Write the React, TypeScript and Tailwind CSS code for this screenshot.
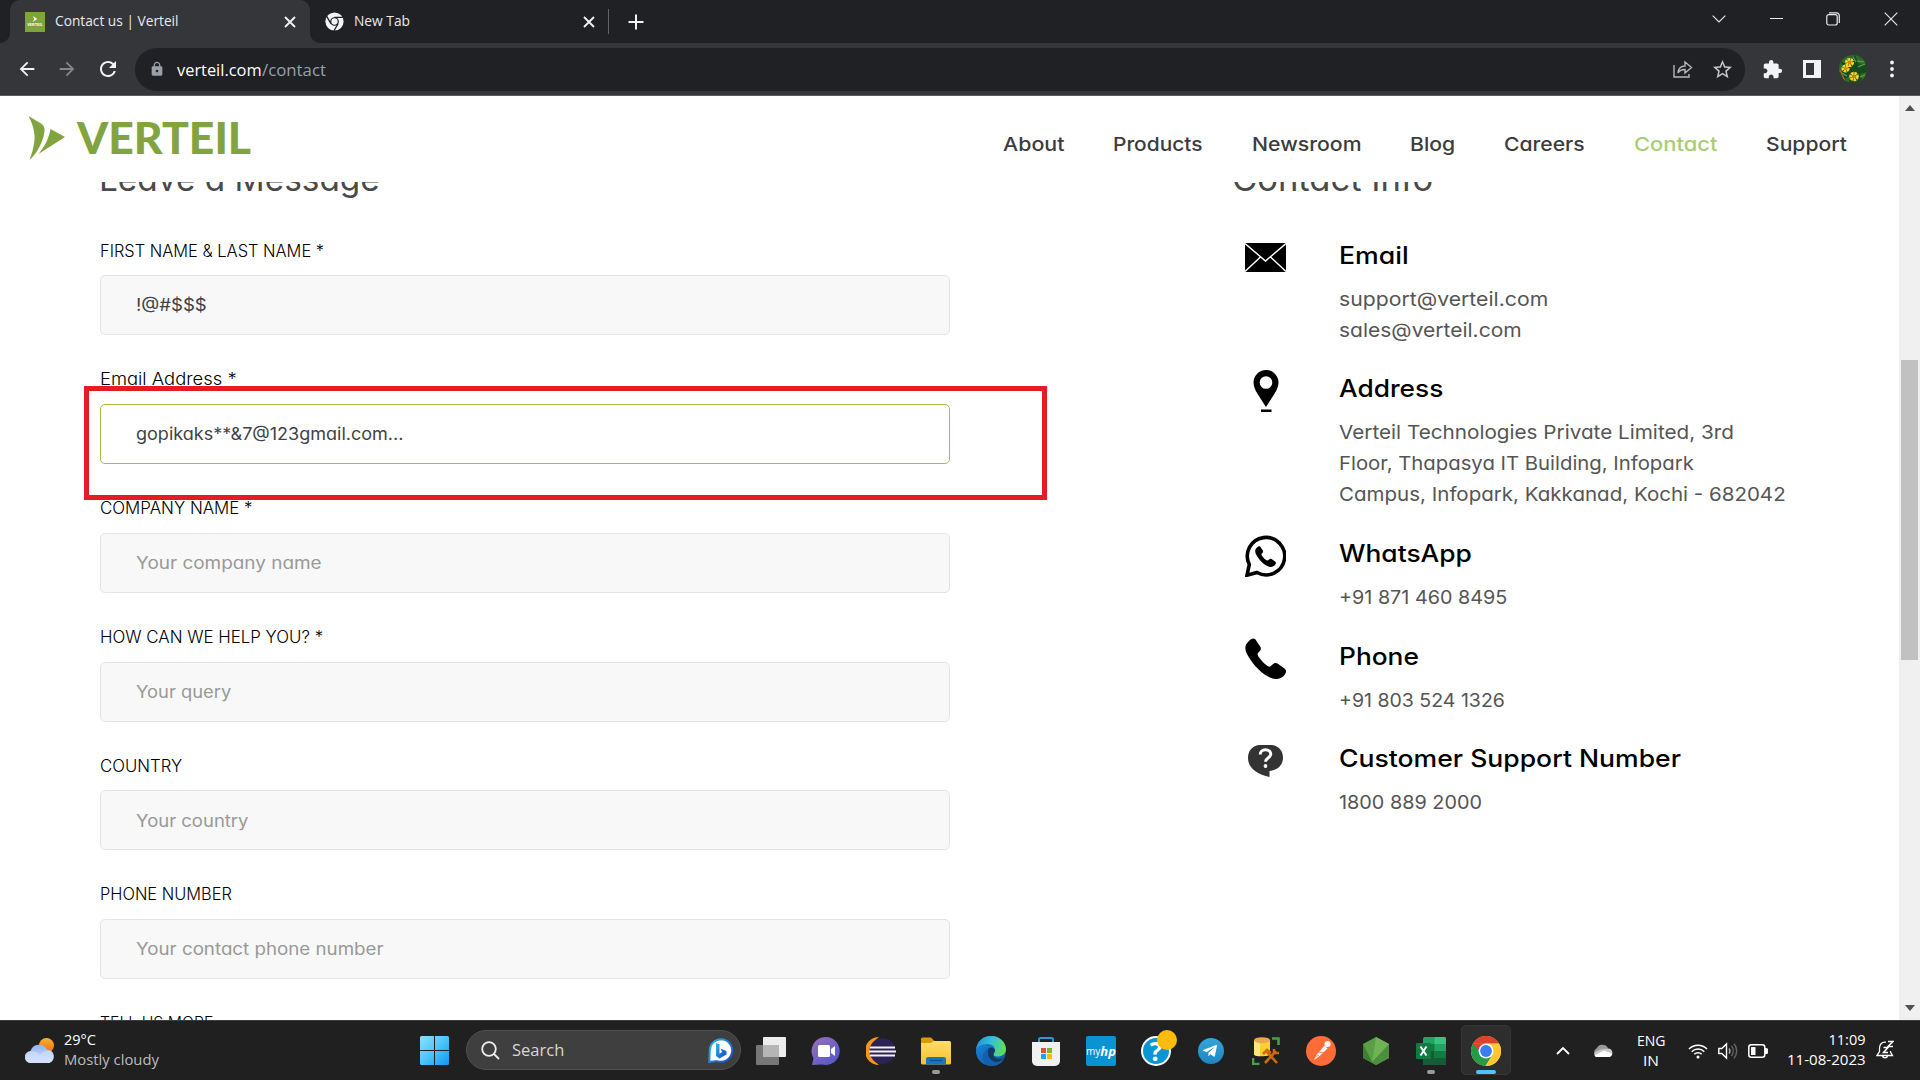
import { useLayoutEffect, useRef, type ReactNode } from "react";
import { MdArrowBack, MdArrowForward, MdExtension, MdLock, MdRefresh, MdStarBorder } from "react-icons/md";
import { FaTelegramPlane } from "react-icons/fa";

/* Single line of text whose glyphs are stretched so that it spans w pixels. */
function Fit({ w, className = "", children }: { w: number; className?: string; children: string }) {
  const ref = useRef<HTMLSpanElement>(null);
  useLayoutEffect(() => {
    const el = ref.current;
    if (!el) return;
    el.style.transform = `scaleX(${w / el.offsetWidth})`;
  }, [w, children]);
  return (
    <span className={"block shrink-0 " + className} style={{ width: w }}>
      <span ref={ref} className="inline-block origin-left whitespace-nowrap">
        {children}
      </span>
    </span>
  );
}

function CloseIcon({ className = "" }: { className?: string }) {
  return (
    <svg viewBox="0 0 12 12" className={"size-[12px] " + className} fill="none" stroke="#f1f3f4" strokeWidth="1.8">
      <path d="M1 1l10 10M11 1L1 11" />
    </svg>
  );
}

function TabStrip() {
  return (
    <div className="flex h-[43px] bg-[#202124] text-[14.5px] text-[#e8eaed]">
      <div className="w-[10px] bg-[#35363a]">
        <div className="h-full rounded-br-[10px] bg-[#202124]" />
      </div>
      <div className="flex h-full w-[300px] items-center rounded-t-[10px] bg-[#35363a] pl-[15px]">
        <div className="flex h-[20px] w-[20px] flex-col items-center justify-center bg-[#7ea43c]">
          <svg viewBox="0 0 8 8" className="size-[6px]" fill="#fff">
            <path d="M1 0l6 4-6 4 2-4z" />
          </svg>
          <span className="text-[4px] leading-[5px] font-bold text-white">VERTEIL</span>
        </div>
        <Fit w={124} className="mb-[2px] ml-[10px]">Contact us | Verteil</Fit>
        <CloseIcon className="ml-[105px]" />
      </div>
      <div className="bg-[#35363a]">
        <div className="flex h-full items-center rounded-bl-[10px] bg-[#202124] pl-[15px]">
          <svg viewBox="0 0 20 20" className="size-[19px]">
            <circle cx="10" cy="10" r="9.6" fill="#f1f3f4" />
            <path d="M10 5.6h9M6.2 12.2L1.7 4.4M13.8 12.2l-4.5 7.8" stroke="#202124" strokeWidth="1.3" />
            <circle cx="10" cy="10" r="4.6" fill="#202124" />
            <circle cx="10" cy="10" r="3.3" fill="#f1f3f4" />
          </svg>
          <Fit w={56} className="mb-[2px] ml-[10px]">New Tab</Fit>
          <CloseIcon className="ml-[173px]" />
          <div className="ml-[13px] h-[25px] w-px bg-[#5f6368]" />
          <svg viewBox="0 0 16 16" className="ml-[19px] size-[16px]" fill="none" stroke="#f1f3f4" strokeWidth="2">
            <path d="M8 0.5v15M0.5 8h15" />
          </svg>
        </div>
      </div>
      <div className="ml-auto flex h-[37px] items-center pr-[22px]">
        <svg viewBox="0 0 14 8" className="h-[8px] w-[14px]" fill="none" stroke="#e8eaed" strokeWidth="1.1">
          <path d="M.7.7L7 7 13.3.7" />
        </svg>
        <div className="ml-[44px] h-px w-[13px] bg-[#e8eaed]" />
        <svg viewBox="0 0 14 14" className="ml-[43px] size-[14px]" fill="none" stroke="#e8eaed" strokeWidth="1.2">
          <rect x=".8" y="2.6" width="10.4" height="10.4" rx="2" />
          <path d="M3 .8h7.5a2.8 2.8 0 0 1 2.8 2.8V11" />
        </svg>
        <svg viewBox="0 0 14 14" className="ml-[44px] size-[14px]" fill="none" stroke="#e8eaed" strokeWidth="1.1">
          <path d="M.7.7l12.6 12.6M13.3.7L.7 13.3" />
        </svg>
      </div>
    </div>
  );
}

function Avatar() {
  return (
    <svg viewBox="0 0 28 28" className="size-[28px]">
      <clipPath id="avatar">
        <circle cx="14" cy="14" r="14" />
      </clipPath>
      <g clipPath="url(#avatar)">
        <rect width="28" height="28" fill="#2c6a29" />
        <path d="M16 0l4 10 8-2v9l-7 2 3 9H10l2-8-9 6-4-8 8-4-6-7 9 2z" fill="#174a1c" />
        <path d="M18 6l7 1M19 12l7-3M3 18l5 3M14 2l3 5M21 22l5-2" stroke="#62a255" strokeWidth="1.2" />
        <path d="M1 15l5 11M22 27l5-6" stroke="#a5652e" strokeWidth="1.5" />
        <g fill="none" stroke="#f4d327" strokeWidth="3.2" strokeDasharray="2.4 .6">
          <circle cx="10.5" cy="7.5" r="3" />
          <circle cx="6.5" cy="13.5" r="2.5" />
          <circle cx="15" cy="21.5" r="3.2" />
        </g>
        <g fill="#d98a14">
          <circle cx="10.5" cy="7.5" r="1.5" />
          <circle cx="6.5" cy="13.5" r="1.4" />
          <circle cx="15" cy="21.5" r="1.6" />
        </g>
      </g>
    </svg>
  );
}

function Toolbar() {
  return (
    <div className="flex h-[53px] items-center border-b border-[#5a5b5f] bg-[#35363a] pl-[16px] text-[#f1f3f4]">
      <MdArrowBack className="size-[22px]" />
      <MdArrowForward className="ml-[18px] size-[22px] text-[#85878a]" />
      <MdRefresh className="ml-[18px] size-[24px]" />
      <div className="ml-[15px] flex h-[43px] w-[1610px] items-center rounded-full bg-[#202124] pl-[14px]">
        <MdLock className="size-[16px] text-[#9aa0a6]" />
        <div className="mt-[1px] ml-[12px] flex text-[16px] leading-[22px]">
          <Fit w={85} className="text-white">verteil.com</Fit>
          <Fit w={64} className="text-[#9aa0a6]">/contact</Fit>
        </div>
        <svg viewBox="0 0 20 18" className="ml-auto h-[18px] w-[20px]" fill="none" stroke="#b6b8bb" strokeWidth="1.4">
          <path d="M1 5v12h15v-3M5 13c.5-5 3-7 7-7V2l6.5 5.500L12 13V9.500c-3.500 0-5.500 1-7 3.500z" />
        </svg>
        <MdStarBorder className="mr-[11px] ml-[18px] size-[23px] text-[#c3c5c8]" />
      </div>
      <MdExtension className="ml-[17px] size-[21px]" />
      <svg viewBox="0 0 18 18" className="ml-[20px] size-[18px]">
        <path d="M0 0h18v18H0zM3 3v12h8V3z" fill="#f1f3f4" fillRule="evenodd" />
      </svg>
      <div className="ml-[18px]">
        <Avatar />
      </div>
      <svg viewBox="0 0 4 18" className="ml-[23px] h-[18px] w-[4px]" fill="#f1f3f4">
        <circle cx="2" cy="2.500" r="1.900" />
        <circle cx="2" cy="9" r="1.900" />
        <circle cx="2" cy="15.500" r="1.900" />
      </svg>
    </div>
  );
}

const NAV = [
  { label: "About", w: 61 },
  { label: "Products", w: 90 },
  { label: "Newsroom", w: 109 },
  { label: "Blog", w: 45 },
  { label: "Careers", w: 81 },
  { label: "Contact", w: 83, active: true },
  { label: "Support", w: 81 },
];

function SiteHeader() {
  return (
    <header className="relative z-10 flex h-[86px] shrink-0 bg-white pl-[28px]">
      <svg viewBox="0 0 38 45" className="mt-[20px] h-[45px] w-[38px]" fill="#82a440">
        <path d="M.5 0L13 7.500c4.500 3 4 7 2.500 13C13 30 8 38 1.500 44c3-8 5.500-17 5-25C6 12 3.500 6 .5 0z" />
        <path d="M22.500 13L37 21 10.500 38C17 30 21 22 22.500 13z" />
      </svg>
      <Fit w={174} className="mt-[16px] ml-[11px] font-['Lato'] text-[44px] leading-[50px] font-black text-[#82a440]">
        VERTEIL
      </Fit>
      <nav className="ml-auto flex gap-[49px] pt-[33px] pr-[52px] text-[19.300px] leading-[30px] font-medium text-[#3c3c3c]">
        {NAV.map((n) => (
          <Fit key={n.label} w={n.w} className={n.active ? "text-[#a9cd74]" : ""}>
            {n.label}
          </Fit>
        ))}
      </nav>
    </header>
  );
}

type FieldData = { label: string; lw: number; text: string; tw: number; filled?: boolean; focus?: boolean };

const FIELDS: FieldData[] = [
  { label: "FIRST NAME & LAST NAME *", lw: 224, text: "!@#$$$", tw: 71, filled: true },
  { label: "Email Address *", lw: 137, text: "gopikaks**&7@123gmail.com...", tw: 267, filled: true, focus: true },
  { label: "COMPANY NAME *", lw: 153, text: "Your company name", tw: 186 },
  { label: "HOW CAN WE HELP YOU? *", lw: 223, text: "Your query", tw: 95 },
  { label: "COUNTRY", lw: 82, text: "Your country", tw: 112 },
  { label: "PHONE NUMBER", lw: 132, text: "Your contact phone number", tw: 248 },
];

function Field({ f }: { f: FieldData }) {
  return (
    <div className="relative h-[128.8px]">
      <Fit w={f.lw} className="text-[16.800px] leading-[24px] font-light text-black">
        {f.label}
      </Fit>
      <div
        className={
          "mt-[12.700px] flex h-[60px] items-center rounded-[5px] border pt-[2px] pl-[35px] text-[17px] " +
          (f.focus ? "border-[#a3c044] bg-white " : "border-[#e4e4e4] bg-[#f8f8f8] ") +
          (f.filled ? "text-[#3f4347]" : "text-[#999]")
        }
      >
        <Fit w={f.tw}>{f.text}</Fit>
      </div>
      {f.focus && <div className="absolute top-[18.500px] -left-[16px] h-[114px] w-[963px] border-5 border-[#e51c27]" />}
    </div>
  );
}

function InfoRow({
  icon,
  title,
  tw,
  lines,
  className,
}: {
  icon: ReactNode;
  title: string;
  tw: number;
  lines: [string, number][];
  className: string;
}) {
  return (
    <div className={"flex " + className}>
      <div className="ml-[11px] w-[41px]">{icon}</div>
      <div className="mt-[1px] ml-[53px]">
        <Fit w={tw} className="text-[24px] leading-[32px] font-medium text-black">
          {title}
        </Fit>
        <div className="mt-[11.500px] text-[19.300px] leading-[31px] text-[#555]">
          {lines.map(([t, w]) => (
            <Fit key={t} w={w}>
              {t}
            </Fit>
          ))}
        </div>
      </div>
    </div>
  );
}

const handset =
  "M4 3C6 .8 8.500-.5 10.500 1.500L15.500 9c1.200 2.500-.5 4-2.500 6-1 1.500 0 3 1.500 5 3 4 6 7 9 8.500 1.500.5 2.500-.5 4-2 1.500-1.500 3-2 5-1l7 5c2.500 2 1.500 4.500 0 6.500-4 5-10 5-15.500 2C14 34 6 24 1.500 15 -.5 10 0 6.500 4 3z";

function ContactInfo() {
  return (
    <div>
      <InfoRow
        className="h-[133px]"
        title="Email"
        tw={70}
        lines={[["support@verteil.com", 209], ["sales@verteil.com", 183]]}
        icon={
          <svg viewBox="0 0 41 29" className="mt-[4px] h-[29px] w-[41px]">
            <rect width="41" height="29" fill="#000" />
            <path d="M0 .5L20.500 18 41 .5M0 28.500L15.500 14M41 28.500L25.500 14" fill="none" stroke="#fff" strokeWidth="1.400" />
          </svg>
        }
      />
      <InfoRow
        className="h-[165px]"
        title="Address"
        tw={104}
        lines={[
          ["Verteil Technologies Private Limited, 3rd", 395],
          ["Floor, Thapasya IT Building, Infopark", 355],
          ["Campus, Infopark, Kakkanad, Kochi - 682042", 447],
        ]}
        icon={
          <svg viewBox="0 0 26 42" className="mx-auto -mt-[2px] h-[42px] w-[26px]">
            <path
              fillRule="evenodd"
              d="M13 0a12.500 12.500 0 0 1 12.500 12.500C25.500 20 19 27 13 37 7 27 .5 20 .5 12.500A12.500 12.500 0 0 1 13 0zm0 6.200a6.300 6.300 0 1 0 0 12.600 6.300 6.300 0 0 0 0-12.600zM8 39.500h10.500V42H8z"
            />
          </svg>
        }
      />
      <InfoRow
        className="h-[103px]"
        title="WhatsApp"
        tw={133}
        lines={[["+91 871 460 8495", 168]]}
        icon={
          <svg viewBox="0 0 41 42" className="-mt-[2px] h-[42px] w-[41px]">
            <path
              d="M4.300 29.500A18.700 18.700 0 1 1 12 37.500L2 40.200z"
              fill="none"
              stroke="#000"
              strokeWidth="3.600"
            />
            <g transform="translate(10 11) scale(.51)">
              <path d={handset} />
            </g>
          </svg>
        }
      />
      <InfoRow
        className="h-[102px]"
        title="Phone"
        tw={80}
        lines={[["+91 803 524 1326", 166]]}
        icon={
          <svg viewBox="0 0 41 41" className="-mt-[2px] size-[41px]">
            <path d={handset} />
          </svg>
        }
      />
      <InfoRow
        className="h-[102px]"
        title="Customer Support Number"
        tw={342}
        lines={[["1800 889 2000", 143]]}
        icon={
          <svg viewBox="0 0 35 32" className="mx-auto mt-[3px] h-[32px] w-[35px]">
            <path
              d="M11 0h13c7 1 11 6 11 12.500C35 20 30 25 21.500 26v6C9 29 0 23 0 13 0 6 4 1 11 0z"
              fill="#333"
            />
            <path
              d="M12.200 9.500c0-3 2.300-4.700 5.300-4.700s5.300 1.700 5.300 4.400c0 3.600-5.300 3.500-5.300 7.600"
              fill="none"
              stroke="#fff"
              strokeWidth="3"
            />
            <circle cx="17.500" cy="21" r="1.900" fill="#fff" />
          </svg>
        }
      />
    </div>
  );
}

function Scrollbar() {
  return (
    <div className="flex w-[21px] flex-col items-center bg-[#f0f0f0]">
      <svg viewBox="0 0 10 6" className="mt-[9px] h-[6px] w-[10px]" fill="#505050">
        <path d="M5 0l5 6H0z" />
      </svg>
      <div className="mt-[249px] h-[300px] w-[17px] bg-[#c1c1c1]" />
      <svg viewBox="0 0 10 6" className="mt-auto mb-[9px] h-[6px] w-[10px]" fill="#505050">
        <path d="M5 6l5-6H0z" />
      </svg>
    </div>
  );
}

function Cell({ children, mark }: { children: ReactNode; mark?: "idle" | "active" }) {
  return (
    <div className="relative flex h-full w-[55px] items-center justify-center">
      {mark === "active" && (
        <div className="absolute top-[4px] left-[2.500px] size-[50px] rounded-[5px] border border-[#363636] bg-[#2d2d2d]" />
      )}
      <div className="relative">{children}</div>
      {mark === "idle" && <div className="absolute bottom-[6px] h-[4px] w-[8px] rounded-full bg-[#9a9a9a]" />}
      {mark === "active" && <div className="absolute bottom-[6px] h-[4px] w-[20px] rounded-full bg-[#4cc2ff]" />}
    </div>
  );
}

function Gradients() {
  return (
    <svg className="absolute size-0">
      <defs>
        <linearGradient id="win" x1="0" y1="0" x2="1" y2="1">
          <stop offset="0" stopColor="#8fe0fb" />
          <stop offset=".5" stopColor="#4cc6f8" />
          <stop offset="1" stopColor="#1197f0" />
        </linearGradient>
        <linearGradient id="cloud" x1="0" y1="0" x2="0" y2="1">
          <stop offset="0" stopColor="#8fb2ee" />
          <stop offset="1" stopColor="#dbe6fb" />
        </linearGradient>
        <linearGradient id="sun" x1="0" y1="0" x2="0" y2="1">
          <stop offset="0" stopColor="#f9b233" />
          <stop offset="1" stopColor="#ee6c10" />
        </linearGradient>
        <linearGradient id="chat" x1="0" y1="0" x2="1" y2="1">
          <stop offset="0" stopColor="#9b70b8" />
          <stop offset="1" stopColor="#4d55cf" />
        </linearGradient>
        <linearGradient id="folder" x1="0" y1="0" x2="0" y2="1">
          <stop offset="0" stopColor="#ffdc6b" />
          <stop offset="1" stopColor="#f9bf2c" />
        </linearGradient>
        <linearGradient id="edgeTop" x1="0" y1=".3" x2="1" y2=".5">
          <stop offset="0" stopColor="#2293dc" />
          <stop offset=".5" stopColor="#35c1d6" />
          <stop offset="1" stopColor="#62dd55" />
        </linearGradient>
        <linearGradient id="edgeLow" x1="0" y1="0" x2="1" y2="1">
          <stop offset="0" stopColor="#1b8ddd" />
          <stop offset="1" stopColor="#0c4ea0" />
        </linearGradient>
        <linearGradient id="bing" x1="0" y1="0" x2="1" y2="1">
          <stop offset="0" stopColor="#2db7e0" />
          <stop offset="1" stopColor="#1847c8" />
        </linearGradient>
        <linearGradient id="tg" x1="0" y1="0" x2="0" y2="1">
          <stop offset="0" stopColor="#35a5dd" />
          <stop offset="1" stopColor="#1c86c0" />
        </linearGradient>
      </defs>
    </svg>
  );
}

function Apps() {
  return (
    <div className="ml-[2.500px] flex h-full">
      <Cell>
        <svg viewBox="0 0 30 28" className="h-[28px] w-[30px]">
          <rect x="7" width="23" height="20" rx="1" fill="#ececec" />
          <rect y="8" width="23" height="20" rx="1" fill="#777" />
          <rect x="7" y="8" width="16" height="12" fill="#b5b5b5" />
        </svg>
      </Cell>
      <Cell>
        <svg viewBox="0 0 30 30" className="size-[30px]">
          <path d="M15 1a14 14 0 1 1-4 27.500L1 29l1.500-7A14 14 0 0 1 15 1z" fill="url(#chat)" />
          <rect x="7" y="9" width="12" height="12" rx="1.500" fill="#fff" />
          <path d="M20 13l4-3v10l-4-3z" fill="#fff" />
        </svg>
      </Cell>
      <Cell>
        <svg viewBox="0 0 30 28" className="h-[28px] w-[30px]">
          <path d="M13 0A14 14 0 0 0 13 28 17 17 0 0 1 13 0z" fill="#f7941e" />
          <circle cx="16.500" cy="14" r="13" fill="#2c2255" />
          <path d="M4 10.500h25M3 14.500h27M4 18.500h25" stroke="#f4f2fa" strokeWidth="2" />
        </svg>
      </Cell>
      <Cell mark="idle">
        <svg viewBox="0 0 30 28" className="h-[28px] w-[30px]">
          <path d="M0 2a1.500 1.500 0 0 1 1.500-1.500H10L13.500 4v8H0z" fill="#d99b0d" />
          <path d="M0 6h10l3-2h15.500A1.500 1.500 0 0 1 30 5.500V26a1.500 1.500 0 0 1-1.500 1.500h-27A1.500 1.500 0 0 1 0 26z" fill="url(#folder)" />
          <path d="M5 27.500V22a2 2 0 0 1 2-2h16a2 2 0 0 1 2 2v5.500z" fill="#1577c4" />
          <path d="M9 23.500h12" stroke="#0b4f8c" strokeWidth="1.300" />
        </svg>
      </Cell>
      <Cell>
        <svg viewBox="0 0 30 30" className="size-[30px]">
          <circle cx="15" cy="15" r="15" fill="url(#edgeLow)" />
          <path d="M0 14C1 5 7 0 15 0c9 0 15 6.500 15 13 0 5-4 7.500-8.500 7.500-3 0-4-1-4-2 0-1.500 1.500-2 1.500-4.500C19 10 15 8 11 8 5 8 1 11 0 14z" fill="url(#edgeTop)" />
          <path d="M12.500 12.500c-2 5-.5 11 7 13.500 3.500 0 6.500-1.500 8.500-4-7 2.500-11-.5-10.500-4 .5-1.500 1.500-2 1.500-4-1.500-3-5-3-6.500-1.500z" fill="#123a5c" />
          <path d="M12.500 12.500c-3 5-1 13 7.500 14.500 3.500-.5 6.500-2.500 8.500-5-1 3-5 8-13 8C9 30 6 24 7 19c.7-3 3-5.500 5.500-6.500z" fill="#1260ae" />
        </svg>
      </Cell>
      <Cell>
        <svg viewBox="0 0 30 30" className="size-[30px]">
          <path d="M8 7V3.500A1.500 1.500 0 0 1 9.500 2h11A1.500 1.500 0 0 1 22 3.500V7" fill="none" stroke="#2a9ad6" strokeWidth="2" />
          <path d="M1 6h28v19a5 5 0 0 1-5 5H6a5 5 0 0 1-5-5z" fill="#f0f0f0" />
          <path d="M10 12h5v5h-5z" fill="#e8502a" />
          <path d="M16 12h5v5h-5z" fill="#7fb91d" />
          <path d="M10 18h5v5h-5z" fill="#1fa3e8" />
          <path d="M16 18h5v5h-5z" fill="#fbb811" />
        </svg>
      </Cell>
      <Cell>
        <div className="flex size-[30px] items-center justify-center rounded-[2px] bg-[#0a93d3] text-white">
          <span className="text-[10px] leading-[14px]">my</span>
          <span className="text-[13px] leading-[14px] font-bold italic">hp</span>
        </div>
      </Cell>
      <Cell>
        <div className="relative flex size-[30px] items-center justify-center rounded-full border-[2px] border-white bg-[#0b95d4] text-[26px] leading-[26px] font-bold text-white">
          ?
          <div className="absolute -top-[8px] left-[14px] size-[20px] rounded-full bg-[#fdbb0c]" />
        </div>
      </Cell>
      <Cell>
        <svg viewBox="0 0 26 26" className="size-[26px]">
          <circle cx="13" cy="13" r="13" fill="url(#tg)" />
        </svg>
        <FaTelegramPlane className="absolute top-[5px] left-[4px] size-[16px] text-white" />
      </Cell>
      <Cell>
        <svg viewBox="0 0 28 28" className="size-[28px]">
          <path d="M2 3v14c0 3 16 3 16 0V3z" fill="#fbd034" />
          <path d="M2 3v14c0 2 4 2.300 6 2.300V4z" fill="#ffe680" />
          <ellipse cx="10" cy="3.200" rx="8" ry="3" fill="#eda750" />
          <path d="M20 1.500h6.500V8M1 21v6h6.500" fill="none" stroke="#46a046" strokeWidth="2.600" />
          <path d="M13 26l11-12M15 15l10 11M11 17l4-4 4 3M22 12v4h5" fill="none" stroke="#cc6a0c" strokeWidth="2.600" />
        </svg>
      </Cell>
      <Cell>
        <svg viewBox="0 0 30 30" className="size-[30px]">
          <circle cx="15" cy="15" r="15" fill="#ff6c37" />
          <circle cx="21.500" cy="8" r="3" fill="#fff" />
          <path d="M18.500 9.500l3 3-8.500 8-5 3.500 2.500-5z" fill="#fff" />
          <path d="M12 16l6 1M9 21l4-2" stroke="#ff6c37" strokeWidth=".8" />
        </svg>
      </Cell>
      <Cell>
        <svg viewBox="0 0 26 28" className="h-[28px] w-[26px]">
          <path d="M13 0l13 7v14l-13 7-13-7V7z" fill="#5a9e46" />
          <path d="M13 0l13 7v14L9 25z" fill="#6fb354" />
          <path d="M0 7l9 18 4 3L0 21z" fill="#3f7e35" />
          <path d="M26 7v14l-13 7-4-3z" fill="#4c8f3e" />
        </svg>
      </Cell>
      <Cell mark="idle">
        <svg viewBox="0 0 30 28" className="h-[28px] w-[30px]">
          <rect x="7" y="0" width="23" height="28" rx="1.500" fill="#21a366" />
          <path d="M7 14h11.500v14h-10A1.500 1.500 0 0 1 7 26.500z" fill="#185c37" />
          <path d="M18.500 0H28.500A1.500 1.500 0 0 1 30 1.500V7H18.500z" fill="#33c481" />
          <path d="M7 7h11.500v7H7zM18.500 14H30v7H18.500z" fill="#107c41" />
          <path d="M7 21h23v5.500a1.500 1.500 0 0 1-1.500 1.500h-20A1.500 1.500 0 0 1 7 26.500z" fill="#185c37" />
          <rect x="0" y="6" width="15" height="16" rx="1" fill="#107c41" />
          <path d="M4.500 9.500l6 9M10.500 9.500l-6 9" stroke="#fff" strokeWidth="2" />
        </svg>
      </Cell>
      <Cell mark="active">
        <svg viewBox="0 0 30 30" className="size-[30px]">
          <circle cx="15" cy="15" r="15" fill="#fcc934" />
          <path d="M2 7.500A15 15 0 0 1 28 7.500H15z" fill="#dd4132" />
          <path d="M2 7.500A15 15 0 0 0 14.500 30L21.500 18.800 15 15z" fill="#259b49" />
          <path d="M2 7.500l6.500 11.300L15 8z" fill="#259b49" />
          <path d="M2 7.500h26L15 15H8z" fill="#dd4132" />
          <path d="M15 7.500h13A15 15 0 0 1 14.500 30l7-11.500z" fill="#fcc934" />
          <circle cx="15" cy="15" r="7.500" fill="#fff" />
          <circle cx="15" cy="15" r="5.900" fill="#3b7ded" />
        </svg>
      </Cell>
    </div>
  );
}

function Tray() {
  return (
    <div className="ml-[42px] flex h-full items-center text-[14.500px] leading-[20px] text-white">
      <svg viewBox="0 0 14 8" className="h-[8px] w-[14px]" fill="none" stroke="#fff" strokeWidth="1.800">
        <path d="M1 7l6-6 6 6" />
      </svg>
      <svg viewBox="0 0 20 13" className="ml-[23px] h-[13px] w-[20px]">
        <path d="M4 12a4 4 0 0 1-.5-7.500A6.500 6.500 0 0 1 15 4l-4 5z" fill="#999" />
        <path d="M3 13a3.500 3.500 0 0 1-1-5L8 5.500l7-1a4.300 4.300 0 0 1 1 8.500z" fill="#c8c8c8" />
        <path d="M3 13l-1.500-1.500L11 6.500l8 3A3.500 3.500 0 0 1 16 13z" fill="#fff" />
      </svg>
      <div className="ml-[24px] flex flex-col items-center">
        <Fit w={29}>ENG</Fit>
        <Fit w={16}>IN</Fit>
      </div>
      <svg viewBox="0 0 20 16" className="ml-[22px] h-[16px] w-[20px]" fill="none" stroke="#fff" strokeWidth="1.500">
        <path d="M1 6a12.500 12.500 0 0 1 18 0M3.700 8.700a8.800 8.800 0 0 1 12.600 0M6.300 11.300a5.200 5.200 0 0 1 7.400 0" />
        <circle cx="10" cy="14" r="1.500" fill="#fff" stroke="none" />
      </svg>
      <svg viewBox="0 0 20 18" className="ml-[10px] h-[18px] w-[20px]" fill="none" stroke="#fff" strokeWidth="1.400">
        <path d="M.8 6.500h3L8.500 2v14l-4.700-4.500h-3z" />
        <path d="M11 6.500a4 4 0 0 1 0 5" stroke="#aaa" />
        <path d="M13.500 4a8 8 0 0 1 0 10M16 1.800a11 11 0 0 1 0 14.400" stroke="#666" />
      </svg>
      <svg viewBox="0 0 20 14" className="ml-[10px] h-[14px] w-[20px]">
        <rect x=".8" y=".8" width="16" height="12.400" rx="2.500" fill="none" stroke="#fff" strokeWidth="1.500" />
        <rect x="3" y="3" width="4.500" height="8" rx=".5" fill="#fff" />
        <path d="M17.500 4.500a2.500 2.500 0 0 1 0 5z" stroke="#fff" strokeWidth="1.200" fill="#fff" />
      </svg>
      <div className="mb-[2px] ml-[19px] flex w-[79px] flex-col items-end">
        <Fit w={37}>11:09</Fit>
        <Fit w={79}>11-08-2023</Fit>
      </div>
      <svg viewBox="0 0 18 20" className="mb-[2px] ml-[10px] h-[20px] w-[18px]" fill="none" stroke="#fff" strokeWidth="1.300">
        <path d="M10 2.200C5.500 1.500 3.500 5 3.500 8v3.500L1 15.500h15.500L14.500 12v-1M6.500 16c.5 2.500 4.500 2.500 5 0" />
        <path d="M12 1.500h5l-5 5h5M7.500 7.500h4.500L7.500 12.500H12" strokeWidth="1.500" />
      </svg>
    </div>
  );
}

function Taskbar() {
  return (
    <footer className="flex h-[60px] items-center border-t border-[#3c3c3c] bg-[#202020] pl-[25px]">
      <Gradients />
      <svg viewBox="0 0 30 26" className="h-[26px] w-[30px]">
        <circle cx="21.500" cy="7.500" r="7.500" fill="url(#sun)" />
        <path d="M6 25A6 6 0 0 1 5.500 13 9 9 0 0 1 22 11.500a7 7 0 0 1 2 13.500z" fill="url(#cloud)" />
        <path d="M6 25a6 6 0 0 1-1-11.500c5-1 8 1 10 3.500 3-4 8-5 12-3.500a7 7 0 0 1-3 11.500z" fill="#d3e0fa" fillOpacity=".65" />
      </svg>
      <div className="mb-[2px] ml-[9px] w-[100px] text-[14.500px] leading-[20px]">
        <Fit w={32} className="text-white">29°C</Fit>
        <Fit w={95} className="text-[#bcbcbc]">Mostly cloudy</Fit>
      </div>
      <svg viewBox="0 0 29 29" className="ml-[256px] size-[29px]" fill="url(#win)">
        <path d="M1.500 0H14v14H0V1.500A1.500 1.500 0 0 1 1.500 0zM15 0h12.500A1.500 1.500 0 0 1 29 1.500V14H15zM0 15h14v14H1.500A1.500 1.500 0 0 1 0 27.500zM15 15h14v12.500a1.500 1.500 0 0 1-1.500 1.500H15z" />
      </svg>
      <div className="mb-[1px] ml-[17px] flex h-[40px] w-[275px] items-center rounded-full border border-[#505050] bg-[#3f3f3f] pl-[14px]">
        <svg viewBox="0 0 19 19" className="size-[19px]" fill="none" stroke="#eee" strokeWidth="1.800">
          <circle cx="8" cy="8" r="6.800" />
          <path d="M13 13l5 5" />
        </svg>
        <Fit w={52} className="ml-[12px] text-[16.500px] leading-[24px] text-[#d6d6d6]">Search</Fit>
        <svg viewBox="0 0 25 25" className="mr-[7px] ml-auto size-[25px]">
          <path d="M13 1.200a11.300 11.300 0 1 1-4 21.900L1.200 24 1.800 12A11.300 11.300 0 0 1 13 1.200z" fill="#fff" stroke="url(#bing)" strokeWidth="2" />
          <path d="M8 5l3.500 1.200v9.600L14 14l-1.500-3.500L18.500 13v3.500L11.500 20.500 8 18z" fill="url(#bing)" />
        </svg>
      </div>
      <Apps />
      <Tray />
    </footer>
  );
}

export default function App() {
  return (
    <div className="flex h-[1080px] w-[1920px] flex-col overflow-hidden bg-white font-['Open_Sans',sans-serif]">
      <TabStrip />
      <Toolbar />
      <div className="flex h-[924px] font-['Inter',sans-serif] [font-feature-settings:'cv11']">
        <div className="flex w-[1899px] flex-col overflow-hidden">
          <SiteHeader />
          <main className="-mt-[23px] flex min-h-0 flex-1 pl-[100px]">
            <section className="w-[850px]">
              <Fit w={281} className="-ml-[1px] text-[33.500px] leading-[40px] text-[#4a4a4a]">Leave a Message</Fit>
              <div className="mt-[39.500px]">
                {FIELDS.map((f) => (
                  <Field key={f.label} f={f} />
                ))}
                <Fit w={113} className="text-[16.800px] leading-[24px] font-light text-black">TELL US MORE</Fit>
              </div>
            </section>
            <section className="ml-[284px]">
              <Fit w={201} className="-ml-[2px] text-[33.500px] leading-[40px] text-[#4a4a4a]">Contact Info</Fit>
              <div className="mt-[40px]">
                <ContactInfo />
              </div>
            </section>
          </main>
        </div>
        <Scrollbar />
      </div>
      <Taskbar />
    </div>
  );
}
